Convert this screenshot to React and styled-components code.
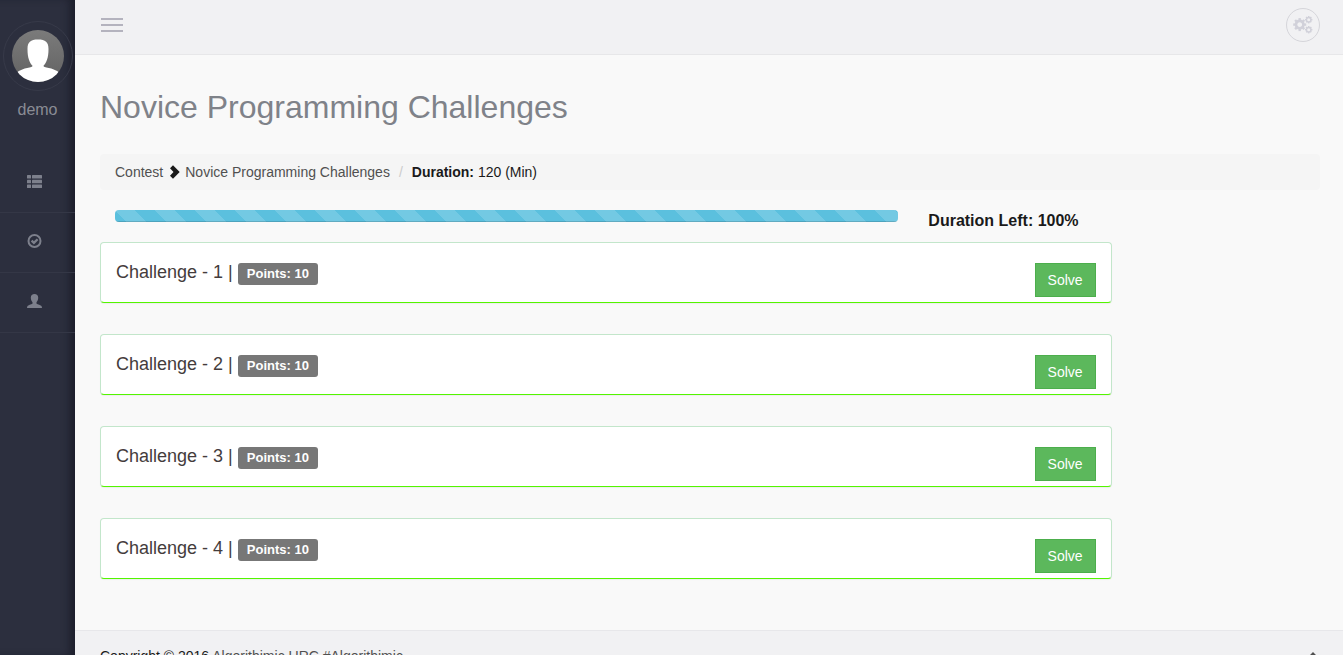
import React from "react";
import styled, { createGlobalStyle } from "styled-components";

const GlobalStyle = createGlobalStyle`
  *, *::before, *::after { box-sizing: border-box; }
  body {
    margin: 0;
    background: #f9f9f9;
    color: #1a1a1a;
    font: 14px/20px "Liberation Sans", Arial, sans-serif;
  }
`;

const Shell = styled.div`
  display: flex;
  height: 100vh;
`;

const Sidebar = styled.aside`
  flex: none;
  width: 75px;
  padding-top: 21px;
  background: #2c2f3e;
  box-shadow: inset -8px 0 8px -3px #1c1e2b;
`;

const Profile = styled.div`
  display: flex;
  flex-direction: column;
  align-items: center;
  gap: 9px;
  color: #8a8c95;
  font-size: 16px;
`;

const AvatarRing = styled.span`
  display: flex;
  align-items: center;
  justify-content: center;
  width: 70px;
  height: 70px;
  border: 1px solid #373a49;
  border-radius: 50%;
`;

const SideNav = styled.nav`
  margin-top: 33px;
`;

const SideLink = styled.a`
  display: flex;
  align-items: center;
  justify-content: center;
  height: 60px;
  padding: 0 6px 3px 0;
  border-bottom: 1px solid #343746;
  color: #7d808c;
`;

const Page = styled.div`
  flex: 1;
  min-width: 0;
  overflow-y: auto;
  scrollbar-width: none;
`;

const TopBar = styled.header`
  display: flex;
  align-items: center;
  justify-content: space-between;
  height: 55px;
  padding: 0 23px 5px 26px;
  background: #f1f1f3;
  border-bottom: 1px solid #e7e7e9;
`;

const MenuButton = styled.button`
  display: flex;
  flex-direction: column;
  gap: 4px;
  width: 22px;
  padding: 0;
  border: 0;
  background: none;
  cursor: pointer;
`;

const MenuBar = styled.span`
  height: 2px;
  background: #b4b3be;
`;

const SettingsButton = styled.button`
  display: flex;
  align-items: center;
  justify-content: center;
  width: 34px;
  height: 34px;
  padding: 0;
  border: 1px solid #d5d5da;
  border-radius: 50%;
  background: none;
  color: #d1d1da;
  cursor: pointer;
`;

const Content = styled.main`
  padding: 34px 23px 51px 25px;
`;

const Title = styled.h1`
  margin: 0 0 29px;
  color: #7f8289;
  font-size: 32px;
  font-weight: 400;
  line-height: 36px;
`;

const Breadcrumb = styled.nav`
  display: flex;
  align-items: center;
  height: 36px;
  padding: 0 15px;
  border-radius: 4px;
  background: #f5f5f5;
`;

const TextLink = styled.a`
  color: #505050;
  text-decoration: none;
`;

const Chevron = styled.svg`
  margin: 0 5px 0 6px;
`;

const Slash = styled.span`
  padding: 0 9px;
  color: #cccccc;
`;

const DurationRow = styled.section`
  display: flex;
  align-items: flex-start;
  height: 32px;
  margin-top: 20px;
`;

const ProgressColumn = styled.div`
  width: 66.6667%;
  padding: 0 15px;
`;

const ProgressTrack = styled.div`
  height: 12px;
  overflow: hidden;
  border-radius: 4px;
  background: #f5f5f5;
`;

const ProgressFill = styled.div`
  height: 100%;
  background-color: #5bc0de;
  background-image: linear-gradient(
    45deg,
    rgba(255, 255, 255, 0.15) 25%, transparent 25%, transparent 50%,
    rgba(255, 255, 255, 0.15) 50%, rgba(255, 255, 255, 0.15) 75%, transparent 75%
  );
  background-size: 40px 40px;
  box-shadow: inset 0 -1px 0 rgba(0, 0, 0, 0.15);
`;

const DurationLeft = styled.strong`
  padding: 0 15px;
  font-size: 16px;
  line-height: 22px;
`;

const ChallengeList = styled.ul`
  display: flex;
  flex-direction: column;
  gap: 31px;
  width: calc(83% - 1px);
  margin: 0;
  padding: 0;
  list-style: none;
`;

const Challenge = styled.li`
  display: flex;
  align-items: flex-start;
  justify-content: space-between;
  height: 61px;
  padding: 20px 15px 0;
  border: 1px solid #c3e6cb;
  border-bottom-color: #53f500;
  border-radius: 4px;
  background: #ffffff;
  box-shadow: 0 1px 1px rgba(0, 0, 0, 0.05);
`;

const ChallengeTitle = styled.h2`
  display: flex;
  align-items: flex-start;
  gap: 5px;
  margin: 0;
  color: #443c3c;
  font-size: 18px;
  font-weight: 400;
  line-height: 18px;
`;

const Points = styled.span`
  padding: 0 9px;
  border-radius: 3px;
  background: #777777;
  color: #ffffff;
  font-size: 13px;
  font-weight: 700;
  line-height: 22px;
`;

const SolveButton = styled.button`
  height: 34px;
  padding: 0 12px;
  border: 1px solid #4cae4c;
  background: #5cb85c;
  color: #ffffff;
  font: inherit;
  cursor: pointer;
`;

const Footer = styled.footer`
  display: flex;
  justify-content: space-between;
  padding: 15px 23px 20px 25px;
  border-top: 1px solid #e7e7ea;
  background: #f1f1f3;
  line-height: 20px;
`;

const TopLink = styled.a`
  display: flex;
  align-items: center;
  align-self: center;
  color: #505050;
`;

const Avatar = () => (
  <svg width="52" height="52" viewBox="0 0 52 52" role="img" aria-label="demo">
    <defs>
      <linearGradient id="avatarShade" x1="0" y1="0" x2="0" y2="1">
        <stop offset="0" stopColor="#7b7b7b" />
        <stop offset="1" stopColor="#626262" />
      </linearGradient>
      <clipPath id="avatarClip"><circle cx="26" cy="26" r="26" /></clipPath>
    </defs>
    <g clipPath="url(#avatarClip)">
      <rect width="52" height="52" fill="url(#avatarShade)" />
      <path
        fill="#fff"
        d="M26 9.500c7.500 0 10.500 2.500 10.500 9.500 0 9-2 13.500-5.200 17 1.200 1.700 4.700 1.500 8 2.500 4 1.300 8 3.500 10.700 6.500V54H2V45c2.700-3 6.700-5.200 10.700-6.500 3.300-1 6.800-.8 8-2.500C17.500 32.500 15.500 28 15.500 19c0-7 3-9.500 10.500-9.500z"
      />
    </g>
  </svg>
);

const ListIcon = () => (
  <svg width="15" height="14" viewBox="0 -1 15 14" fill="currentColor" aria-hidden="true">
    <rect width="4" height="3.500" rx="0.500" />
    <rect x="5" width="10" height="3.500" rx="0.500" />
    <rect y="4.800" width="4" height="3.500" rx="0.500" />
    <rect x="5" y="4.800" width="10" height="3.500" rx="0.500" />
    <rect y="9.500" width="4" height="3.500" rx="0.500" />
    <rect x="5" y="9.500" width="10" height="3.500" rx="0.500" />
  </svg>
);

const CheckIcon = () => (
  <svg width="15" height="14" viewBox="0 0 15 14" fill="none" stroke="currentColor" aria-hidden="true">
    <circle cx="7.500" cy="7" r="6" strokeWidth="2" />
    <path d="M4.600 6.700l2.300 2.200 3.700-3.700" strokeWidth="2.300" />
  </svg>
);

const UserIcon = () => (
  <svg width="15" height="14" viewBox="0 0 15 14" fill="currentColor" aria-hidden="true">
    <path d="M7.500 0C9.700 0 11.200 1.400 11.200 3.600c0 2-.7 3.600-1.700 4.700v1.200c0 .7 3.700 1.400 4.700 2.300.6.500.8 1.300.8 2.200H0c0-.9.2-1.700.8-2.200 1-.9 4.700-1.600 4.700-2.300V8.300C4.500 7.200 3.800 5.600 3.800 3.600 3.800 1.400 5.300 0 7.500 0z" />
  </svg>
);

const Gear = ({ cx, cy, radius, ring, weight, tooth }) => (
  <g transform={`translate(${cx} ${cy})`}>
    <circle r={ring} fill="none" stroke="currentColor" strokeWidth={weight} />
    {[0, 45, 90, 135, 180, 225, 270, 315].map((angle) => (
      <rect
        key={angle}
        x={-tooth / 2}
        y={-radius}
        width={tooth}
        height={radius - ring}
        fill="currentColor"
        transform={`rotate(${angle})`}
      />
    ))}
  </g>
);

const GearsIcon = () => (
  <svg width="20" height="18" viewBox="0 0 20 18" aria-hidden="true">
    <Gear cx={6.700} cy={8.600} radius={6.500} ring={3.700} weight={2.600} tooth={2.400} />
    <Gear cx={15.700} cy={3.700} radius={3.700} ring={2.200} weight={1.400} tooth={1.500} />
    <Gear cx={15.700} cy={13.700} radius={3.700} ring={2.200} weight={1.400} tooth={1.500} />
  </svg>
);

const sideLinks = [
  { label: "Contests", Icon: ListIcon },
  { label: "Submissions", Icon: CheckIcon },
  { label: "Profile", Icon: UserIcon },
];

const challenges = [
  { id: 1, points: 10 },
  { id: 2, points: 10 },
  { id: 3, points: 10 },
  { id: 4, points: 10 },
];

export default function App() {
  const remaining = 100;
  return (
    <>
      <GlobalStyle />
      <Shell>
        <Sidebar>
          <Profile>
            <AvatarRing><Avatar /></AvatarRing>
            <span>demo</span>
          </Profile>
          <SideNav>
            {sideLinks.map(({ label, Icon }) => (
              <SideLink key={label} href="#" aria-label={label}><Icon /></SideLink>
            ))}
          </SideNav>
        </Sidebar>
        <Page>
          <TopBar>
            <MenuButton type="button" aria-label="Menu">
              <MenuBar /><MenuBar /><MenuBar />
            </MenuButton>
            <SettingsButton type="button" aria-label="Settings">
              <GearsIcon />
            </SettingsButton>
          </TopBar>
          <Content>
            <Title>Novice Programming Challenges</Title>
            <Breadcrumb aria-label="Breadcrumb">
              <TextLink href="#">Contest</TextLink>
              <Chevron width="11" height="14" viewBox="0 0 11 14" fill="#1a1a1a" aria-hidden="true">
                <path d="M4 .3L10.700 7 4 13.700 1 10.700 4.500 7 1 3.300z" />
              </Chevron>
              <TextLink href="#">Novice Programming Challenges</TextLink>
              <Slash>/</Slash>
              <span><b>Duration:</b> 120 (Min)</span>
            </Breadcrumb>
            <DurationRow>
              <ProgressColumn>
                <ProgressTrack role="progressbar" aria-label="Duration left" aria-valuenow={remaining}>
                  <ProgressFill style={{ width: `${remaining}%` }} />
                </ProgressTrack>
              </ProgressColumn>
              <DurationLeft>Duration Left: {remaining}%</DurationLeft>
            </DurationRow>
            <ChallengeList>
              {challenges.map(({ id, points }) => (
                <Challenge key={id}>
                  <ChallengeTitle>
                    <span>Challenge - {id} |</span>
                    <Points>Points: {points}</Points>
                  </ChallengeTitle>
                  <SolveButton type="button">Solve</SolveButton>
                </Challenge>
              ))}
            </ChallengeList>
          </Content>
          <Footer>
            <span>Copyright © 2016 <TextLink href="#">Algorithimic URC #Algorithimic</TextLink></span>
            <TopLink href="#" aria-label="Back to top">
              <svg width="14" height="8" viewBox="0 0 14 8" fill="currentColor" aria-hidden="true">
                <path d="M7 0l6 6-2 2-4-4-4 4-2-2z" />
              </svg>
            </TopLink>
          </Footer>
        </Page>
      </Shell>
    </>
  );
}
